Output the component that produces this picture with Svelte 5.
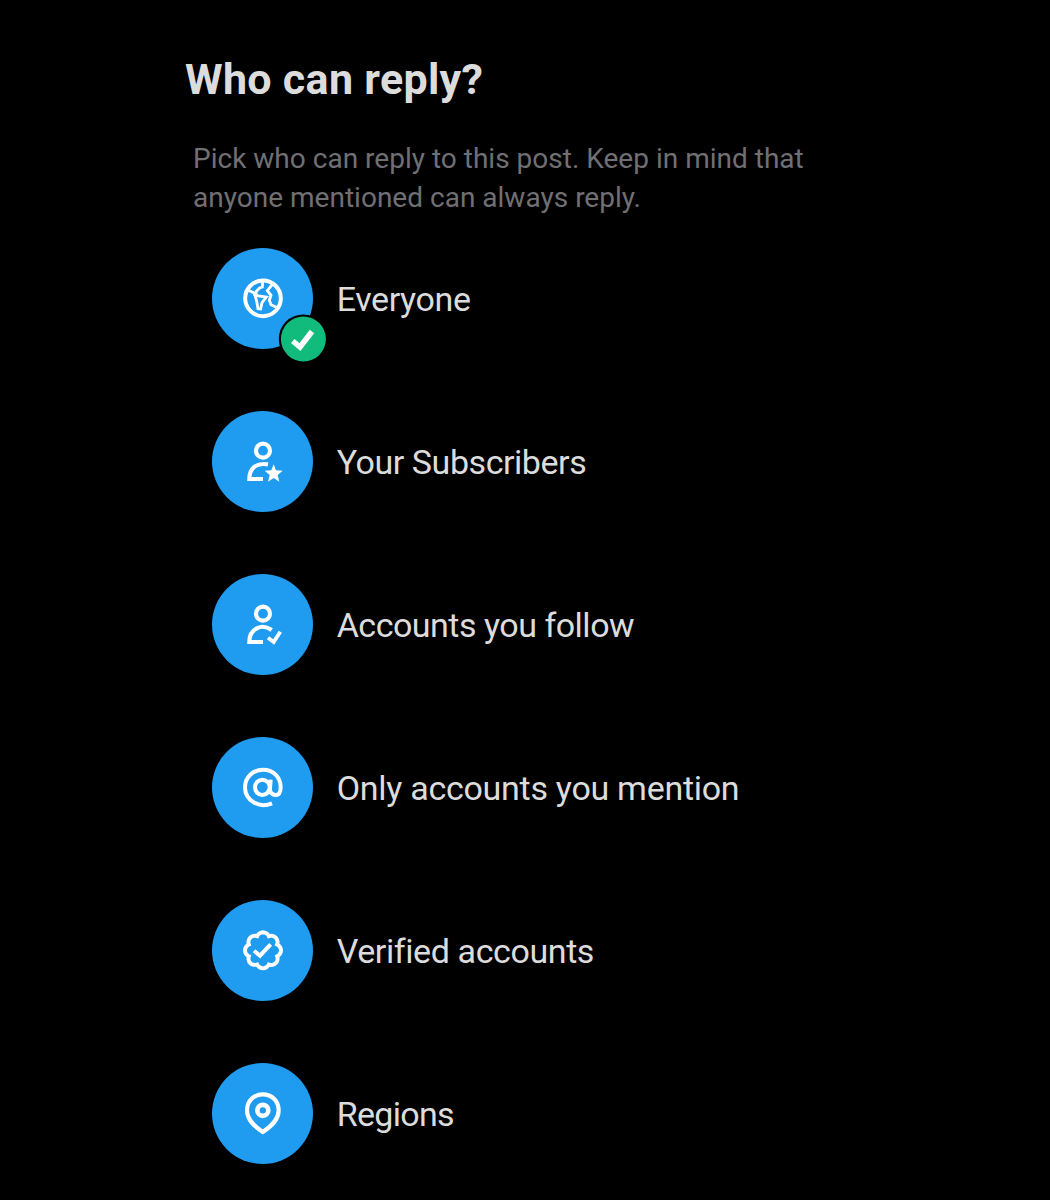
<script>
  const options = [
    { id: 'everyone', label: 'Everyone', selected: true },
    { id: 'subscribers', label: 'Your Subscribers' },
    { id: 'following', label: 'Accounts you follow' },
    { id: 'mention', label: 'Only accounts you mention' },
    { id: 'verified', label: 'Verified accounts' },
    { id: 'regions', label: 'Regions' }
  ];
</script>

<main>
  <h1>Who can reply?</h1>
  <p>Pick who can reply to this post. Keep in mind that<br />anyone mentioned can always reply.</p>

  <ul>
    {#each options as option (option.id)}
      <li>
        <span class="disc">
          <svg class="icon" viewBox="21 23 303 303" aria-hidden="true">
            {#if option.id === 'everyone'}
              <g stroke-width="12">
                <circle cx="174" cy="174" r="53.5" />
                <g stroke-width="8.5">
                  <path d="M128 149L148 158L150 166" />
                  <path d="M150 165L184 170L171 187L167 206L159 205L155 182Z" />
                  <path d="M153 163L154 153L164 143L172 140L173 123" />
                  <path d="M203 131L187 151L198 165L193 180L198 193L214 201" />
                </g>
              </g>
            {:else if option.id === 'subscribers'}
              <g stroke-width="12.5">
                <circle cx="174" cy="142" r="21" />
                <path d="M189 183C150 177 133 198 133 227H174" />
              </g>
              <path class="solid" d="M206 183L213 201L233 202L218 215L223 235L206 224L189 235L194 215L179 202L199 201Z" />
            {:else if option.id === 'following'}
              <g stroke-width="12.5">
                <circle cx="174" cy="142" r="21" />
                <path d="M200 191C170 169 133 188 133 227H174" />
                <path d="M189 214L206 227L226 196" stroke-width="11.5" />
              </g>
            {:else if option.id === 'mention'}
              <g stroke-width="12">
                <path d="M201 222C164 238 120 215 120 174C120 144 144 121 174 121C204 121 227 143 227 173C227 189 221 197 212 197C201 197 194 189 195 177L197 151" />
                <ellipse cx="172" cy="174" rx="22" ry="23" />
              </g>
            {:else if option.id === 'verified'}
              <path
                transform="translate(110.75 110.75) scale(5.75)"
                stroke-width="2.05"
                d="M20.396 11c-.018-.646-.215-1.275-.57-1.816-.354-.54-.852-.972-1.438-1.246.223-.607.27-1.264.14-1.897-.131-.634-.437-1.218-.882-1.687-.47-.445-1.053-.75-1.687-.882-.633-.13-1.29-.083-1.897.14-.273-.587-.704-1.086-1.245-1.44S11.647 1.62 11 1.604c-.646.017-1.273.213-1.813.568s-.969.854-1.24 1.44c-.608-.223-1.267-.272-1.902-.14-.635.13-1.22.436-1.69.882-.445.47-.749 1.055-.878 1.688-.13.633-.08 1.29.144 1.896-.587.274-1.087.705-1.443 1.245-.356.54-.555 1.17-.574 1.817.02.647.218 1.276.574 1.817.356.54.856.972 1.443 1.245-.224.606-.274 1.263-.144 1.896.13.634.433 1.218.877 1.688.47.443 1.054.747 1.687.878.633.132 1.29.084 1.897-.136.274.586.705 1.084 1.246 1.439.54.354 1.17.551 1.816.569.647-.016 1.276-.213 1.817-.567s.972-.854 1.245-1.44c.604.239 1.266.296 1.903.164.636-.132 1.22-.447 1.68-.907.46-.46.776-1.044.908-1.681s.075-1.299-.165-1.903c.586-.274 1.084-.705 1.439-1.246.354-.54.551-1.17.569-1.816z"
              />
              <path d="M147 175L165 190L197 156" stroke-width="12" />
            {:else}
              <path d="M173.5 230C148 213 126 194 126 165C126 137 147 117 173.5 117C200 117 221 137 221 165C221 194 199 213 173.5 230Z" stroke-width="12.5" />
              <circle cx="173.5" cy="165" r="16.5" stroke-width="14" />
            {/if}
          </svg>
          {#if option.selected}
            <svg class="badge" viewBox="0 0 50 50" aria-label="Selected">
              <circle class="ring" cx="25.4" cy="25" r="24.6" />
              <circle class="fill" cx="25.4" cy="25" r="22.5" />
              <path d="M14.8 27L22 33L34 17.5" stroke-width="5.5" />
            </svg>
          {/if}
        </span>
        <span class="label {option.id}">{option.label}</span>
      </li>
    {/each}
  </ul>
</main>

<style>
  :global(body) {
    background: #000;
  }

  main {
    box-sizing: border-box;
    width: 1050px;
    height: 1200px;
    overflow: hidden;
    padding: 54px 0 0 185px;
    background: #000;
    color: #dcdcdc;
    font-family: Roboto, 'Liberation Sans', sans-serif;
  }

  h1 {
    margin: 0;
    font-size: 43px;
    line-height: 50px;
    font-weight: 700;
    letter-spacing: 0.3px;
    white-space: nowrap;
  }

  p {
    margin: 35px 0 0 8px;
    color: #707074;
    font-size: 28px;
    line-height: 39px;
    letter-spacing: 0.01px;
    white-space: nowrap;
  }

  ul {
    display: flex;
    flex-direction: column;
    gap: 62px;
    margin: 31px 0 0 27.3px;
    padding: 0;
    list-style: none;
  }

  li {
    display: flex;
    align-items: center;
    gap: 23.4px;
    height: 101px;
  }

  .disc {
    position: relative;
    flex: none;
    width: 101px;
    height: 101px;
    border-radius: 50%;
    background: #1f9bf0;
  }

  svg {
    fill: none;
    stroke: #fff;
  }

  .icon {
    display: block;
    width: 101px;
    height: 101px;
  }

  .solid {
    fill: #fff;
    stroke: none;
  }

  .badge {
    position: absolute;
    left: 66px;
    top: 66px;
    width: 50px;
    height: 50px;
  }

  .ring {
    fill: #000;
    stroke: none;
  }

  .fill {
    fill: #10bb7c;
    stroke: none;
  }

  .label {
    font-size: 34px;
    line-height: 44px;
    letter-spacing: -0.4px;
    white-space: nowrap;
  }

  .subscribers {
    letter-spacing: -0.45px;
  }

  .following {
    letter-spacing: -0.5px;
  }

  .mention {
    letter-spacing: -0.28px;
  }

  .regions {
    letter-spacing: -0.7px;
  }
</style>
